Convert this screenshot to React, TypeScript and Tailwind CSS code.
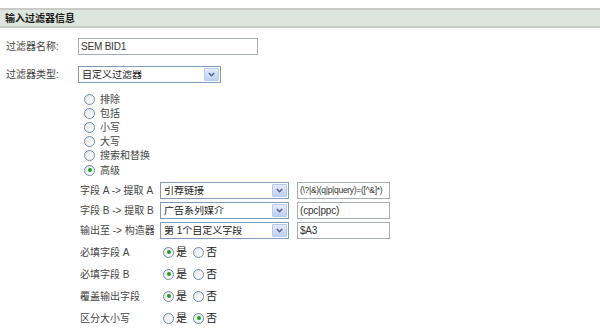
import React from "react";

const font = { fontFamily: '"Liberation Sans", "Noto Sans CJK SC", sans-serif' };

function Radio({ checked }: { checked?: boolean }) {
  return (
    <span className="inline-flex h-[11px] w-[11px] items-center justify-center rounded-full border border-[#6b8bb0] bg-gradient-to-br from-[#e6e6e6] to-white">
      {checked && <span className="h-[4px] w-[4px] rounded-full bg-[#21a121]" />}
    </span>
  );
}

function Select({ value, width }: { value: string; width: string }) {
  return (
    <div className={`flex h-[17px] ${width} items-center border border-[#7f9db9] bg-white`}>
      <span className="flex-1 truncate pl-[3px] text-[10px] leading-none text-[#222]">{value}</span>
      <span className="mr-[1px] flex h-[13px] w-[15px] items-center justify-center rounded-[1px] border border-[#b7c9ec] bg-gradient-to-b from-[#e3ebfd] to-[#bfd0f6]">
        <svg width="7" height="5" viewBox="0 0 7 5">
          <path d="M0.8 1 L3.5 3.8 L6.2 1" fill="none" stroke="#4d6185" strokeWidth="1.4" />
        </svg>
      </span>
    </div>
  );
}

function TextBox({ value, width, small }: { value: string; width: string; small?: boolean }) {
  return (
    <div
      className={`flex h-[17px] ${width} items-center overflow-hidden whitespace-nowrap border border-[#a5acb5] bg-white pl-[2px] leading-none text-[#333] ${
        small ? "text-[8.5px] tracking-[-0.3px]" : "text-[10px] tracking-[-0.2px]"
      }`}
    >
      {value}
    </div>
  );
}

export default function App() {
  const types = ["排除", "包括", "小写", "大写", "搜索和替换", "高级"];
  const fields = [
    { label: "字段 A -> 提取 A", sel: "引荐链接", text: "(\\?|&)(q|p|query)=([^&]*)", small: true },
    { label: "字段 B -> 提取 B", sel: "广告系列媒介", text: "(cpc|ppc)" },
    { label: "输出至 -> 构造器", sel: "第 1个自定义字段", text: "$A3" },
  ];
  const yesNo = [
    { label: "必填字段 A", yes: true },
    { label: "必填字段 B", yes: true },
    { label: "覆盖输出字段", yes: true },
    { label: "区分大小写", yes: false },
  ];

  return (
    <div className="h-[334px] w-[600px] overflow-hidden bg-white pt-[8px] text-[#444]" style={font}>
      <div className="flex h-[20px] items-center border-y-2 border-[#c9cbc6] bg-[#dde6dd] px-[5px] text-[10px] font-bold text-[#1a1a1a]">
        输入过滤器信息
      </div>

      <div className="pl-[6px] text-[10px]">
        <div className="mt-[10px] flex items-center">
          <span className="w-[72px]">过滤器名称:</span>
          <TextBox value="SEM BID1" width="w-[180px]" />
        </div>

        <div className="mt-[11px] flex items-start">
          <span className="w-[72px] pt-[1px]">过滤器类型:</span>
          <Select value="自定义过滤器" width="w-[143px]" />
        </div>

        <div className="ml-[78px] mt-[9px] flex flex-col">
          {types.map((t, i) => (
            <div key={t} className="flex h-[14.2px] items-center gap-[5px]">
              <Radio checked={i === types.length - 1} />
              <span>{t}</span>
            </div>
          ))}
        </div>

        <div className="ml-[74px] mt-[5px] flex flex-col gap-[3px]">
          {fields.map((f) => (
            <div key={f.label} className="flex items-center">
              <span className="w-[80px] overflow-hidden whitespace-pre">{f.label}</span>
              <Select value={f.sel} width="w-[129px]" />
              <span className="w-[8px]" />
              <TextBox value={f.text} width="w-[93px]" small={f.small} />
            </div>
          ))}
        </div>

        <div className="ml-[74px] mt-[2px] flex flex-col">
          {yesNo.map((r) => (
            <div key={r.label} className="flex h-[22px] items-center">
              <span className="w-[83px]">{r.label}</span>
              <span className="flex items-center gap-[2px]">
                <Radio checked={r.yes} />
                <span className="text-[11px] text-[#222]">是</span>
              </span>
              <span className="ml-[6px] flex items-center gap-[2px]">
                <Radio checked={!r.yes} />
                <span className="text-[11px] text-[#222]">否</span>
              </span>
            </div>
          ))}
        </div>
      </div>
    </div>
  );
}
